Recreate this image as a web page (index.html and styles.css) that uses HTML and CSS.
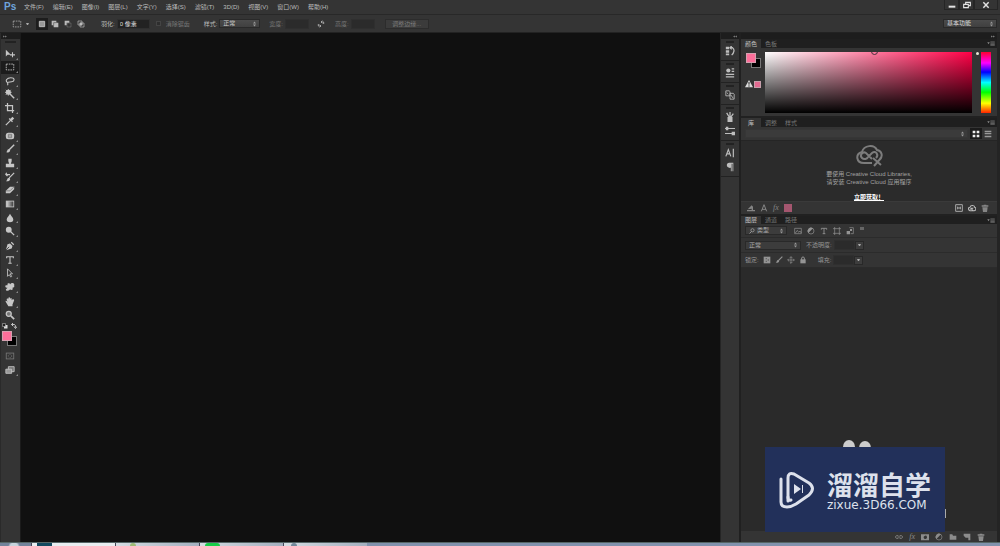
FILE: index.html
```
<!DOCTYPE html>
<html lang="zh-CN">
<head>
<meta charset="utf-8">
<title>Photoshop</title>
<link rel="stylesheet" href="styles.css">
</head>
<body>
<svg class="defs" aria-hidden="true">
<defs>
<symbol id="move" viewBox="0 0 12 12"><path fill="currentColor" d="M1 1v8l2-2h4z"/><path stroke="currentColor" stroke-width="1.300" fill="none" d="M9 4v6M6 7h6"/></symbol>
<symbol id="marquee" viewBox="0 0 12 12"><rect x="1.500" y="2.500" width="9" height="7" fill="none" stroke="currentColor" stroke-dasharray="2 1"/></symbol>
<symbol id="lasso" viewBox="0 0 12 12"><path fill="none" stroke="currentColor" stroke-width="1.300" d="M3 8C0 6 2 2 7 2s5 4 1 5-5 0-5 1 1 1 0 3"/></symbol>
<symbol id="wand" viewBox="0 0 12 12"><circle cx="4" cy="4" r="3" fill="currentColor"/><path stroke="currentColor" stroke-width="1.700" d="M4 4l7 7"/><path stroke="currentColor" d="M1 1l6 6M1 7l6-6M4 0v8M0 4h8"/></symbol>
<symbol id="crop" viewBox="0 0 12 12"><path fill="none" stroke="currentColor" stroke-width="1.500" d="M3 0v9h8M0 3h9v9"/></symbol>
<symbol id="dropper" viewBox="0 0 12 12"><path stroke="currentColor" stroke-width="1.500" d="M1 11l6-6"/><path stroke="currentColor" stroke-width="3" d="M7 5l3-3"/><path stroke="currentColor" stroke-width="1.500" d="M5 3l4 4"/></symbol>
<symbol id="heal" viewBox="0 0 12 12"><rect x="1" y="2" width="10" height="8" rx="3" fill="currentColor"/><path stroke="#777" fill="none" d="M4 4h4v4H4zM4 6h4"/></symbol>
<symbol id="brush" viewBox="0 0 12 12"><path stroke="currentColor" stroke-width="1.700" d="M5 7l6-6"/><path fill="currentColor" d="M1 10c2 0 1-4 4-4 3 2 0 5-4 4z"/></symbol>
<symbol id="stamp" viewBox="0 0 12 12"><path fill="currentColor" d="M4 1h4v3L7 7h4v3H1V7h4L4 4zM1 10h10v1H1z"/></symbol>
<symbol id="history" viewBox="0 0 12 12"><path stroke="currentColor" stroke-width="1.500" fill="none" d="M5 7l6-6M1 3h5M2 1L1 3l2 2"/><path fill="currentColor" d="M1 11c2 0 1-4 4-4 3 2 0 5-4 4z"/></symbol>
<symbol id="eraser" viewBox="0 0 12 12"><path fill="currentColor" d="M1 7l5-5h5v3l-5 5H1z"/><path stroke="#777" fill="none" d="M1 7h5l5-5"/></symbol>
<symbol id="gradient" viewBox="0 0 12 12"><linearGradient id="tool-gradient"><stop stop-color="#ddd"/><stop offset="1" stop-color="#333"/></linearGradient><rect x="1.500" y="2.500" width="9" height="7" fill="url(#tool-gradient)" stroke="currentColor"/></symbol>
<symbol id="drop" viewBox="0 0 12 12"><path fill="currentColor" d="M6 1c1 3 4 4 4 7 0 4-8 4-8 0 0-3 3-4 4-7z"/></symbol>
<symbol id="dodge" viewBox="0 0 12 12"><circle cx="4.500" cy="4.500" r="3.500" fill="currentColor"/><path stroke="currentColor" stroke-width="1.500" d="M6 6l5 5"/></symbol>
<symbol id="pen" viewBox="0 0 12 12"><path fill="currentColor" d="M1 11l2-7 3-1 3 3-1 3zM7 2l1-1 3 3-1 1z"/><path stroke="#333" d="M1 11l4-4"/></symbol>
<symbol id="type" viewBox="0 0 12 12"><path fill="none" stroke="currentColor" stroke-width="1.300" d="M2 4V2h8v2M6 2v8M4 10h4"/></symbol>
<symbol id="select" viewBox="0 0 12 12"><path fill="none" stroke="currentColor" d="M3 1v9l2-2 2 3 1-1-2-3h3z"/></symbol>
<symbol id="shape" viewBox="0 0 12 12"><path fill="currentColor" d="M3 2c2-1 3 0 3 1 2-3 6-2 5 1 1 2-1 3-2 3 1 3-1 3-3 2-2 2-5 2-5 0l2-2C0 7 0 5 1 4l2 0z"/></symbol>
<symbol id="hand" viewBox="0 0 12 12"><path fill="currentColor" d="M4 11L1 6c-1-2 1-2 2 0L2 3c0-2 2-1 2 0V1c1-1 2-1 2 0v1c1-1 2-1 2 0v2c1-2 3-1 3 0L9 9v2z"/></symbol>
<symbol id="zoom" viewBox="0 0 12 12"><circle cx="4.500" cy="4.500" r="3" fill="#777" stroke="currentColor" stroke-width="1.500"/><path stroke="currentColor" stroke-width="2" d="M7 7l4 4"/></symbol>
<symbol id="mask" viewBox="0 0 12 12"><rect x="1.500" y="2.500" width="9" height="7" fill="none" stroke="currentColor"/><circle cx="6" cy="6" r="2" fill="none" stroke="currentColor" stroke-dasharray="1 1"/></symbol>
<symbol id="screen" viewBox="0 0 12 12"><path fill="#777" stroke="currentColor" d="M4 2h7v6H4z"/><path fill="#999" stroke="currentColor" d="M1 5h7v5H1z"/></symbol>
<symbol id="sq1" viewBox="0 0 12 12"><path fill="#999" stroke="currentColor" stroke-width="1.500" d="M2 2h8v8H2z"/></symbol>
<symbol id="sq2" viewBox="0 0 12 12"><path fill="currentColor" d="M1 1h7v3h3v7H4V8H1z"/><path stroke="#555" fill="none" d="M4 8V4h4"/></symbol>
<symbol id="sq3" viewBox="0 0 12 12"><path fill="currentColor" d="M1 1h7v3H4v4H1z"/><path stroke="currentColor" fill="none" d="M4.500 4.500h6v6h-6z" opacity=".4"/></symbol>
<symbol id="sq4" viewBox="0 0 12 12"><path stroke="currentColor" fill="none" d="M1.500 1.500h6v6h-6zM4.500 4.500h6v6h-6z"/><path fill="currentColor" d="M4 4h4v4H4z"/></symbol>
<symbol id="swap" viewBox="0 0 12 12"><path fill="none" stroke="currentColor" stroke-width="1.400" d="M6 3h4v3M8 1L6 3l2 2M6 9H2V6M4 7l2 2-2 2"/></symbol>
<symbol id="turn" viewBox="0 0 12 12"><path fill="none" stroke="currentColor" stroke-width="2" d="M1 3h6q2 0 2 6M4 0L1 3l3 3M6 7l3 4 3-4"/></symbol>
<symbol id="pair" viewBox="0 0 12 12"><path fill="#ddd" d="M4 4h7v7H4z"/><path fill="#222" stroke="#ccc" d="M1 1h6v6H1z"/></symbol>
<symbol id="hist" viewBox="0 0 12 12"><path fill="currentColor" d="M1 1h4v3H1zM1 5h4v3H1zM1 9h4v2H1z"/><path fill="none" stroke="currentColor" stroke-width="1.500" d="M6 2h3c3 2 2 6-1 9M8 0L6 2l2 2"/></symbol>
<symbol id="props" viewBox="0 0 12 12"><circle cx="4" cy="3" r="2.500" fill="currentColor"/><path stroke="currentColor" stroke-width="1.500" d="M8 1h3M8 4h3M1 7.500h10M1 10.500h10"/></symbol>
<symbol id="clone" viewBox="0 0 12 12"><path fill="none" stroke="currentColor" d="M1 1h4l1 1v5H1zM6 4h4l1 1v6H6zM2 3l2 2M7 6l3 4"/></symbol>
<symbol id="pot" viewBox="0 0 12 12"><path fill="currentColor" d="M3 6h6v6H3z"/><path stroke="currentColor" stroke-width="1.500" d="M6 6V0M5 6L2 1M7 6l3-4"/></symbol>
<symbol id="sliders" viewBox="0 0 12 12"><path stroke="currentColor" stroke-width="1.300" d="M0 3h12M0 9h12"/><path fill="currentColor" d="M1 1h3v4H1zM8 7h4v4H8z"/></symbol>
<symbol id="char" viewBox="0 0 12 12"><path fill="none" stroke="currentColor" stroke-width="1.400" d="M1 10l3-8 3 8M2 7h4M10 1v10"/></symbol>
<symbol id="para" viewBox="0 0 12 12"><path fill="currentColor" d="M10 1v10H9V2H8v9H7V7C1 8 1 1 5 1z"/></symbol>
<symbol id="menu" viewBox="0 0 12 8"><path fill="currentColor" d="M0 2h4L2 5z"/><path stroke="currentColor" d="M5 1.500h7M5 3.500h7M5 5.500h7M5 7.500h7"/></symbol>
<symbol id="grid" viewBox="0 0 12 12"><path fill="currentColor" d="M1 1h4v4H1zM7 1h4v4H7zM1 7h4v4H1zM7 7h4v4H7z"/></symbol>
<symbol id="list" viewBox="0 0 12 12"><path fill="currentColor" d="M1 1h10v2H1zM1 4h10v2H1zM1 7h10v1H1zM1 9h10v2H1z"/></symbol>
<symbol id="warn" viewBox="0 0 12 12"><path fill="#ddd" d="M6 0l6 11H0z"/><path stroke="#222" stroke-width="1.500" d="M6 3v4M6 8v2"/></symbol>
<symbol id="cloud" viewBox="0 0 27 22"><g fill="none" stroke="currentColor" stroke-width="2"><path d="M16 18H8C0 18-1 9 6 7 8 0 18-1 21 5c5 1 6 6 3 9"/><path d="M16 14L10 8C7 6 3 10 6 13c2 2 5 1 6-1l4-4c4-3 7 2 4 5"/><path d="M17 13l8 7M25 13l-7 8"/></g></symbol>
<symbol id="fill" viewBox="0 0 12 12"><path fill="currentColor" d="M1 8l6-6 2 2v6H7V7zM0 9h12v2H0z"/></symbol>
<symbol id="letter" viewBox="0 0 12 12"><path fill="none" stroke="currentColor" stroke-width="1.500" d="M2 11L6 1l4 10M3 8h6"/></symbol>
<symbol id="stock" viewBox="0 0 12 12"><path fill="none" stroke="currentColor" stroke-width="1.300" d="M1 1h10v10H1zM4 4v4M8 4v4M4 6h4"/></symbol>
<symbol id="sync" viewBox="0 0 12 12"><path fill="none" stroke="currentColor" stroke-width="1.600" d="M9 10H3C0 9 0 5 3 5c1-4 7-3 7 0 3 1 2 5-1 5-4 0-4-4-1-4M3 8l3-2"/></symbol>
<symbol id="trash" viewBox="0 0 12 12"><path fill="currentColor" d="M4 1h4v1h3v2H1V2h3zM2 5h8l-1 7H3z"/></symbol>
<symbol id="image" viewBox="0 0 12 12"><path fill="none" stroke="currentColor" d="M1 2h10v8H1zM2 9l3-4 2 3 2-2 2 3"/></symbol>
<symbol id="adjust" viewBox="0 0 12 12"><circle cx="6" cy="6" r="4.500" fill="none" stroke="currentColor"/><path fill="currentColor" d="M9 2a5 5 0 0 0-7 7z"/></symbol>
<symbol id="frame" viewBox="0 0 12 12"><path fill="none" stroke="currentColor" d="M2.500 0v12M9.500 0v12M0 2.500h12M0 9.500h12"/></symbol>
<symbol id="smart" viewBox="0 0 12 12"><path fill="none" stroke="currentColor" d="M5 1h6v9H7"/><path fill="currentColor" d="M1 6h5v5H1zM6 3h3v3H6z"/></symbol>
<symbol id="checker" viewBox="0 0 12 12"><path fill="currentColor" d="M1 1h10v10H1z"/><path fill="#666" d="M4 3h2v2H4zM7 5h2v2H7zM4 7h2v2H4z"/></symbol>
<symbol id="cross" viewBox="0 0 12 12"><path fill="none" stroke="currentColor" d="M6 1v10M1 6h10M4 3l2-2 2 2M4 9l2 2 2-2M3 4L1 6l2 2M9 4l2 2-2 2"/></symbol>
<symbol id="lock" viewBox="0 0 12 12"><path fill="currentColor" d="M2 5h8v6H2z"/><path fill="none" stroke="currentColor" stroke-width="1.500" d="M4 6V3c0-2 4-2 4 0v3"/></symbol>
<symbol id="search" viewBox="0 0 12 12"><circle cx="7" cy="4.500" r="3.200" fill="none" stroke="currentColor" stroke-width="1.400"/><path stroke="currentColor" stroke-width="1.600" d="M5 7l-4 4"/></symbol>
<symbol id="link" viewBox="0 0 12 12"><path fill="none" stroke="currentColor" stroke-width="1.300" d="M5 4H3C0 4 0 8 3 8h2M7 4h2c3 0 3 4 0 4H7M4 6h4"/></symbol>
<symbol id="maskbtn" viewBox="0 0 12 12"><path fill="currentColor" fill-rule="evenodd" d="M0 2h12v9H0zM6 4a2 2 0 1 0 1 5 2 2 0 0 0-1-5z"/></symbol>
<symbol id="folder" viewBox="0 0 12 12"><path fill="currentColor" d="M1 2h4l1 2h5v6H1z"/></symbol>
<symbol id="new" viewBox="0 0 12 12"><path fill="currentColor" d="M1 1h10v10H8V7H4L1 4z"/></symbol>
<symbol id="restore" viewBox="0 0 12 12"><path fill="none" stroke="currentColor" stroke-width="1.700" d="M4 4V2h7v5H9M1 5h7v5H1z"/></symbol>
<symbol id="close" viewBox="0 0 12 12"><path stroke="currentColor" stroke-width="2.200" d="M2 2l8 8M10 2l-8 8"/></symbol>
<symbol id="minimize" viewBox="0 0 12 12"><path fill="currentColor" d="M1 7h10v3H1z"/></symbol>
<symbol id="updown" viewBox="0 0 6 12"><path fill="currentColor" d="M0 5l3-4 3 4zM0 7l3 4 3-4z"/></symbol>
<symbol id="left2" viewBox="0 0 12 8"><path fill="currentColor" d="M5 1v6L1 4zM11 1v6L7 4z"/></symbol>
<symbol id="right2" viewBox="0 0 12 8"><path fill="currentColor" d="M1 1v6l4-3zM7 1v6l4-3z"/></symbol>
</defs>
</svg>

<header class="menubar">
  <span class="brand">Ps</span>
  <nav class="menus">
    <button>文件(F)</button><button>编辑(E)</button><button>图像(I)</button><button>图层(L)</button><button>文字(Y)</button><button>选择(S)</button><button>滤镜(T)</button><button>3D(D)</button><button>视图(V)</button><button>窗口(W)</button><button>帮助(H)</button>
  </nav>
  <div class="window-buttons">
    <button aria-label="最小化"><svg class="ico"><use href="#minimize"/></svg></button>
    <button aria-label="还原"><svg class="ico"><use href="#restore"/></svg></button>
    <button aria-label="关闭" class="wide"><svg class="ico"><use href="#close"/></svg></button>
  </div>
</header>

<section class="options">
  <button class="preset" aria-label="选框工具"><svg class="ico big"><use href="#marquee"/></svg><i class="caret"></i></button>
  <div class="modes">
    <button class="on" aria-label="新选区"><svg class="ico"><use href="#sq1"/></svg></button>
    <button aria-label="添加"><svg class="ico"><use href="#sq2"/></svg></button>
    <button aria-label="减去"><svg class="ico"><use href="#sq3"/></svg></button>
    <button aria-label="交叉"><svg class="ico"><use href="#sq4"/></svg></button>
  </div>
  <label class="field feather">羽化:<input class="wide" value="0 像素"></label>
  <label class="field dim alias"><input type="checkbox" disabled>消除锯齿</label>
  <label class="field style">样式:<span class="select"><select><option>正常</option></select><svg><use href="#updown"/></svg></span></label>
  <label class="field dim">宽度:<input disabled></label>
  <button class="swap" aria-label="互换"><svg class="ico"><use href="#swap"/></svg></button>
  <label class="field dim">高度:<input disabled></label>
  <button class="refine" disabled>调整边缘...</button>
  <span class="select workspace-select"><select aria-label="工作区"><option>基本功能</option></select><svg><use href="#updown"/></svg></span>
</section>

<main class="work">
  <aside class="tools">
    <div class="strip"><svg class="chev"><use href="#right2"/></svg></div>
    <div class="grip"></div>
    <div class="group g1">
      <button aria-label="移动"><svg><use href="#move"/></svg></button>
      <button aria-label="矩形选框" class="on"><svg><use href="#marquee"/></svg></button>
      <button aria-label="套索"><svg><use href="#lasso"/></svg></button>
      <button aria-label="魔棒"><svg><use href="#wand"/></svg></button>
      <button aria-label="裁剪"><svg><use href="#crop"/></svg></button>
      <button aria-label="吸管"><svg><use href="#dropper"/></svg></button>
    </div>
    <div class="group g2">
      <button aria-label="修复"><svg><use href="#heal"/></svg></button>
      <button aria-label="画笔"><svg><use href="#brush"/></svg></button>
      <button aria-label="图章"><svg><use href="#stamp"/></svg></button>
      <button aria-label="历史画笔"><svg><use href="#history"/></svg></button>
      <button aria-label="橡皮擦"><svg><use href="#eraser"/></svg></button>
      <button aria-label="渐变"><svg><use href="#gradient"/></svg></button>
      <button aria-label="模糊"><svg><use href="#drop"/></svg></button>
      <button aria-label="减淡"><svg><use href="#dodge"/></svg></button>
    </div>
    <div class="group g3">
      <button aria-label="钢笔"><svg><use href="#pen"/></svg></button>
      <button aria-label="文字"><svg><use href="#type"/></svg></button>
      <button aria-label="路径选择"><svg><use href="#select"/></svg></button>
      <button aria-label="形状"><svg><use href="#shape"/></svg></button>
    </div>
    <div class="group g4">
      <button aria-label="抓手"><svg><use href="#hand"/></svg></button>
      <button aria-label="缩放" class="single"><svg><use href="#zoom"/></svg></button>
    </div>
    <div class="minis"><svg><use href="#pair"/></svg><svg><use href="#turn"/></svg></div>
    <div class="swatches"><i class="back"></i><i class="front"></i></div>
    <div class="modes-bottom">
      <button aria-label="快速蒙版" class="single dimmed"><svg><use href="#mask"/></svg></button>
      <button aria-label="屏幕模式"><svg><use href="#screen"/></svg></button>
    </div>
  </aside>

  <div class="canvas"></div>

  <aside class="dock">
    <div class="strip right"><svg class="chev"><use href="#left2"/></svg></div>
    <div class="cell"><button aria-label="历史记录"><svg><use href="#hist"/></svg></button></div>
    <div class="cell"><button aria-label="属性"><svg><use href="#props"/></svg></button></div>
    <div class="cell"><button aria-label="仿制源"><svg><use href="#clone"/></svg></button></div>
    <div class="cell"><button aria-label="画笔预设"><svg><use href="#pot"/></svg></button><button aria-label="画笔"><svg><use href="#sliders"/></svg></button></div>
    <div class="cell"><button aria-label="字符"><svg><use href="#char"/></svg></button><button aria-label="段落"><svg><use href="#para"/></svg></button></div>
  </aside>

  <aside class="panels">
    <div class="strip right"><svg class="chev"><use href="#right2"/></svg></div>
    <section class="panel">
      <div class="tabs"><button class="on">颜色</button><button>色板</button><svg class="pm"><use href="#menu"/></svg></div>
      <div class="color">
        <div class="chips">
          <div class="swatches small"><i class="back"></i><i class="front"></i></div>
          <div class="gamut"><svg class="ico"><use href="#warn"/></svg><i></i></div>
        </div>
        <div class="spectrum"><i class="picker"></i></div>
        <i class="hue-mark"></i>
        <div class="hue"></div>
      </div>
    </section>
    <section class="panel">
      <div class="tabs"><button class="on">库</button><button>调整</button><button>样式</button><svg class="pm"><use href="#menu"/></svg></div>
      <div class="lib-bar">
        <span class="select grow"><select aria-label="库" disabled><option></option></select><svg><use href="#updown"/></svg></span>
        <button class="on" aria-label="网格"><svg class="ico"><use href="#grid"/></svg></button>
        <button aria-label="列表"><svg class="ico"><use href="#list"/></svg></button>
      </div>
      <div class="lib-body">
        <svg class="cloud"><use href="#cloud"/></svg>
        <p>要使用 Creative Cloud Libraries,<br>请安装 Creative Cloud 应用程序</p>
        <a href="#">立即获取！</a>
      </div>
      <div class="lib-foot">
        <svg class="ico"><use href="#fill"/></svg><svg class="ico"><use href="#letter"/></svg><em>fx</em><i></i>
        <svg class="ico bright push"><use href="#stock"/></svg><svg class="ico bright"><use href="#sync"/></svg><svg class="ico"><use href="#trash"/></svg>
      </div>
    </section>
    <section class="panel layers">
      <div class="tabs"><button class="on">图层</button><button>通道</button><button>路径</button><svg class="pm"><use href="#menu"/></svg></div>
      <div class="row filter">
        <span class="select kind"><svg class="lens"><use href="#search"/></svg><select aria-label="类型"><option>类型</option></select><svg><use href="#updown"/></svg></span>
        <svg class="ico"><use href="#image"/></svg><svg class="ico"><use href="#adjust"/></svg><svg class="ico"><use href="#type"/></svg><svg class="ico"><use href="#frame"/></svg><svg class="ico"><use href="#smart"/></svg><i class="toggle"></i>
      </div>
      <div class="row">
        <span class="select blend"><select aria-label="混合模式"><option>正常</option></select><svg><use href="#updown"/></svg></span>
        <label class="field">不透明度:<input></label><button class="drop" aria-label="不透明度选项"><i class="caret"></i></button>
      </div>
      <div class="row locks">
        <span>锁定:</span><svg class="ico"><use href="#checker"/></svg><svg class="ico"><use href="#brush"/></svg><svg class="ico"><use href="#cross"/></svg><svg class="ico"><use href="#lock"/></svg>
        <label class="field fill">填充:<input></label><button class="drop" aria-label="填充选项"><i class="caret"></i></button>
      </div>
      <div class="layer-list">
        <i class="ear one"></i><i class="ear two"></i><i class="sliver"></i>
        <div class="watermark">
          <svg viewBox="0 0 36 38"><g fill="none" stroke="#dde1ec" stroke-width="3" stroke-linecap="round" stroke-linejoin="round"><path d="M9 30V7q0-6 6-4l15 9q7 5 0 12l-13 9q-5 3-9 3-6 0-6-5V8"/><path d="M9 26q0 4 3 3"/></g><path fill="#dde1ec" d="M15 13l7 5-7 5zM23 14h1v8h-1z"/></svg>
          <div><strong>溜溜自学</strong><span>zixue.3D66.COM</span></div>
        </div>
      </div>
      <div class="layer-foot">
        <svg class="ico"><use href="#link"/></svg><em>fx</em><svg class="ico"><use href="#maskbtn"/></svg><svg class="ico"><use href="#adjust"/></svg><svg class="ico"><use href="#folder"/></svg><svg class="ico"><use href="#new"/></svg><svg class="ico"><use href="#trash"/></svg>
      </div>
    </section>
  </aside>
</main>

<footer class="taskbar"><i class="start"></i><i class="task ps"></i><i class="task leaf"></i><i class="task green"></i><i class="task gray"></i></footer>
</body>
</html>
```
FILE: styles.css
```
* { box-sizing: border-box; }
body {
  margin: 0;
  height: 100vh;
  display: flex;
  flex-direction: column;
  overflow: hidden;
  background: #343434;
  color: #bcbcbc;
  font: 6px/8px "Liberation Sans", "Noto Sans CJK SC", sans-serif;
}
button, input, select {
  margin: 0;
  padding: 0;
  border: 0;
  background: none;
  color: inherit;
  font: inherit;
  appearance: none;
  min-width: 0;
}
button { display: flex; align-items: center; justify-content: center; }
svg { display: block; flex: none; }
i { display: block; flex: none; }
.defs { position: absolute; width: 0; height: 0; }
.ico { width: 8px; height: 8px; }
.ico.big { width: 10px; height: 10px; }
.caret { border: 1px solid transparent; border-top: 2px solid #aaa; border-bottom: 0; width: 3px; }

.menubar { display: flex; height: 14px; align-items: center; padding-left: 4px; }
.brand { width: 20px; color: #6fa5dc; font-weight: bold; font-size: 10px; line-height: 12px; }
.menus { display: flex; gap: 9px; }
.menus button { white-space: nowrap; }
.window-buttons { display: flex; margin-left: auto; align-self: flex-start; margin-right: 2px; color: #e2e2e2; }
.window-buttons button { width: 15px; height: 10px; border: 1px solid #252525; border-top: 0; }
.window-buttons .wide { width: 24px; }

.options { display: flex; height: 19px; align-items: center; border-top: 1px solid #282828; border-bottom: 1px solid #222; padding: 0 3px 0 11px; }
.preset { gap: 4px; width: 19px; color: #aaa; }
.modes { display: flex; gap: 1px; margin: 0 14px 0 6px; color: #bbb; }
.modes button { width: 12px; height: 12px; }
.modes .on { background: #1d1d1d; }
.field { display: flex; align-items: center; gap: 2px; white-space: nowrap; }
.field input { width: 24px; height: 10px; background: #2b2b2b; border: 1px solid #2f2f2f; }
.field .wide { width: 33px; background: #222; color: #ddd; padding-left: 2px; }
.field input[type="checkbox"] { width: 5px; height: 5px; background: #2e2e2e; border-color: #444; margin-right: 3px; }
.dim { color: #777; }
.alias { margin: 0 14px 0 6px; }
.style { margin-right: 9px; }
.select { display: flex; align-items: center; height: 9px; border: 1px solid #292929; background: linear-gradient(#4b4b4b, #404040); padding: 0 3px; color: #c8c8c8; width: 41px; }
.select select { flex: 1; height: 7px; line-height: 7px; opacity: 1; }
.select svg { width: 3px; height: 6px; color: #999; }
.swap { margin: 0 10px 0 8px; color: #aaa; }
.refine { margin-left: 10px; width: 44px; height: 10px; border: 1px solid #2c2c2c; background: #3b3b3b; color: #7c7c7c; }
.workspace-select { width: 54px; margin-left: auto; color: #ddd; }

.work { flex: 1; display: flex; min-height: 0; }
.strip { height: 6px; background: #1d1d1d; display: flex; align-items: center; padding: 0 2px; flex: none; }
.strip.right { justify-content: flex-end; }
.chev { width: 4px; height: 3px; color: #a5a5a5; }

.tools { width: 21px; flex: none; border-right: 1px solid #1b1b1b; border-left: 1px solid #2a2a2a; display: flex; flex-direction: column; color: #c6c6c6; }
.grip { height: 2px; margin: 2px 4px 4px; background: #222; flex: none; }
.group { display: flex; flex-direction: column; flex: none; }
.g1 { height: 81px; }
.g2 { height: 110px; padding-top: 1px; }
.g3 { height: 56px; padding-top: 1px; }
.g4 { height: 28px; padding-top: 1px; }
.group button { flex: 1; min-height: 0; }
.tools button { position: relative; width: 18px; }
.tools button svg { width: 10px; height: 10px; }
.tools button::after { content: ""; position: absolute; right: 1px; bottom: 1px; border-left: 2px solid transparent; border-bottom: 2px solid #8a8a8a; }
.tools .single::after { display: none; }
.tools button.on { background: #1c1c1c; }
.minis { display: flex; justify-content: space-between; height: 8px; padding: 1px 3px 0 1px; flex: none; }
.minis svg { width: 6px; height: 6px; }
.swatches { position: relative; height: 18px; flex: none; }
.swatches .front, .swatches .back { position: absolute; width: 10px; height: 10px; border: 1px solid #777; }
.swatches .front { left: 1px; top: 1px; background: #fc6f9a; border-color: #d5a0b0; }
.swatches .back { left: 6px; top: 6px; background: #000; }
.modes-bottom { display: flex; flex-direction: column; padding-top: 1px; }
.modes-bottom button { height: 14px; }
.tools .dimmed { color: #777; }

.canvas { flex: 1; background: #101010; }

.dock { width: 21px; flex: none; border-left: 1px solid #252525; border-right: 2px solid #202020; color: #bebebe; display: flex; flex-direction: column; }
.cell { border-bottom: 1px solid #222; display: flex; flex-direction: column; align-items: center; padding: 5px 0 2px; position: relative; }
.cell::before { content: ""; position: absolute; top: 2px; left: 5px; right: 5px; height: 2px; background: #222; }
.cell button { width: 19px; height: 14px; }
.cell svg { width: 10px; height: 10px; }

.panels { width: 259px; flex: none; display: flex; flex-direction: column; border-right: 3px solid #242424; }
.panel { border-bottom: 2px solid #212121; flex: none; }
.tabs { display: flex; height: 9px; background: #1f1f1f; padding-right: 2px; align-items: stretch; flex: none; }
.tabs button { padding: 0 3px; color: #777; width: 20px; }
.tabs .on { background: #343434; color: #c0c0c0; }
.pm { width: 8px; height: 5px; margin: 2px 0 0 auto; color: #8a8a8a; }
.color { display: flex; height: 68px; padding: 4px 6px 3px 4px; }
.chips { width: 20px; }
.swatches.small { height: 28px; }
.gamut { display: flex; gap: 1px; align-items: center; }
.gamut i { width: 7px; height: 7px; background: #e36b91; border: 1px solid #c7a0ac; }
.spectrum { flex: 1; position: relative; overflow: hidden; background: linear-gradient(transparent, #000), linear-gradient(90deg, #fff, #ff0046); }
.picker { position: absolute; left: 51%; top: -4px; width: 7px; height: 7px; border: 1px solid #44303a; border-radius: 50%; }
.hue-mark { width: 3px; height: 3px; border-radius: 50%; background: #e6e6d5; margin: 0 2px 0 4px; }
.hue { width: 10px; background: linear-gradient(#ff0030, #f0f 18%, #00f 33%, #0ff 50%, #0f0 66%, #ff0 84%, #f20 100%); }

.lib-bar { display: flex; height: 14px; align-items: center; padding: 0 3px 0 4px; border-bottom: 1px solid #252525; color: #999; }
.grow { flex: 1; margin-right: 2px; }
.lib-bar .select { background: #3b3b3b; border-color: #363636; }
.lib-bar button { width: 12px; height: 11px; }
.lib-bar .on { background: #1b1b1b; color: #eee; }
.lib-body { height: 60px; background: #2b2b2b; display: flex; flex-direction: column; align-items: center; padding-top: 4px; color: #a2a2a2; overflow: hidden; }
.cloud { width: 27px; height: 22px; color: #7c7c7c; }
.lib-body p { margin: 3px 0 7px; text-align: center; }
.lib-body a { color: #fff; font-weight: bold; }
.lib-foot { display: flex; align-items: center; gap: 5px; height: 13px; padding: 0 8px 0 6px; border-top: 1px solid #3a3a3a; color: #858585; }
em { font: italic 8px/8px "Liberation Serif", serif; }
.lib-foot i { width: 8px; height: 8px; background: #a4566f; }
.push { margin-left: auto; }
.bright { color: #bbb; }

.layers { flex: 1; display: flex; flex-direction: column; min-height: 0; border: 0; }
.layers .tabs { height: 8px; }
.row { display: flex; align-items: center; height: 15px; padding: 0 4px; border-bottom: 1px solid #2b2b2b; flex: none; color: #949494; }
.row .select { background: #3c3c3c; color: #a8a8a8; }
.row.filter { height: 14px; }
.filter .ico { margin-right: 5px; color: #949494; }
.filter .kind { width: 42px; margin-right: 7px; gap: 2px; }
.select .lens { width: 6px; height: 6px; color: #aaa; }
.toggle { width: 4px; height: 3px; background: #666; margin: 0 0 5px 1px; }
.row .blend { width: 56px; margin-right: 5px; }
.row .field input { width: 21px; }
.drop { width: 9px; height: 9px; border: 1px solid #282828; background: #3d3d3d; }
.locks { gap: 4px; }
.locks .fill { margin-left: 7px; }
.locks .drop { margin-left: -4px; }
.layer-list { flex: 1; position: relative; background: #2a2a2a; }
.ear { position: absolute; width: 12px; height: 14px; border-radius: 50%; background: #ccc; }
.one { right: 142px; bottom: 77px; }
.two { right: 126px; bottom: 76px; }
.sliver { position: absolute; right: 51px; bottom: 13px; width: 2px; height: 9px; background: #aaa; }
.watermark { position: absolute; right: 52px; bottom: -1px; width: 180px; height: 85px; background: #22305a; display: flex; align-items: center; justify-content: center; gap: 12px; color: #dde1ec; }
.watermark svg { width: 36px; height: 38px; }
.watermark strong { display: block; font: bold 26px/30px "Noto Sans CJK SC", sans-serif; }
.watermark span { display: block; font: 12px/12px "DejaVu Sans", sans-serif; white-space: nowrap; }
.layer-foot { display: flex; height: 11px; align-items: center; justify-content: flex-end; gap: 6px; padding-right: 12px; color: #8c8c8c; flex: none; }

.taskbar { display: flex; height: 4px; background: #8192ad; flex: none; border-top: 1px solid #566; }
.start { width: 31px; background: radial-gradient(circle at 14px 4px, #c8d5dd 4px, #72839b 6px); }
.task { width: 84px; border-left: 1px solid #445; background: linear-gradient(90deg, #d5dce2, #a3afbf); }
.task::before { content: ""; display: block; width: 15px; height: 3px; margin-left: 5px; }
.task.ps { background: #e8edf0; }
.ps::before { background: #12495f; }
.leaf::before { background: #9dba75; width: 6px; margin-left: 14px; border-radius: 3px 3px 0 0; }
.green::before { background: #16cc48; border-radius: 3px 3px 0 0; }
.gray::before { background: #71889a; width: 6px; margin-left: 7px; border-radius: 3px 3px 0 0; }
```
